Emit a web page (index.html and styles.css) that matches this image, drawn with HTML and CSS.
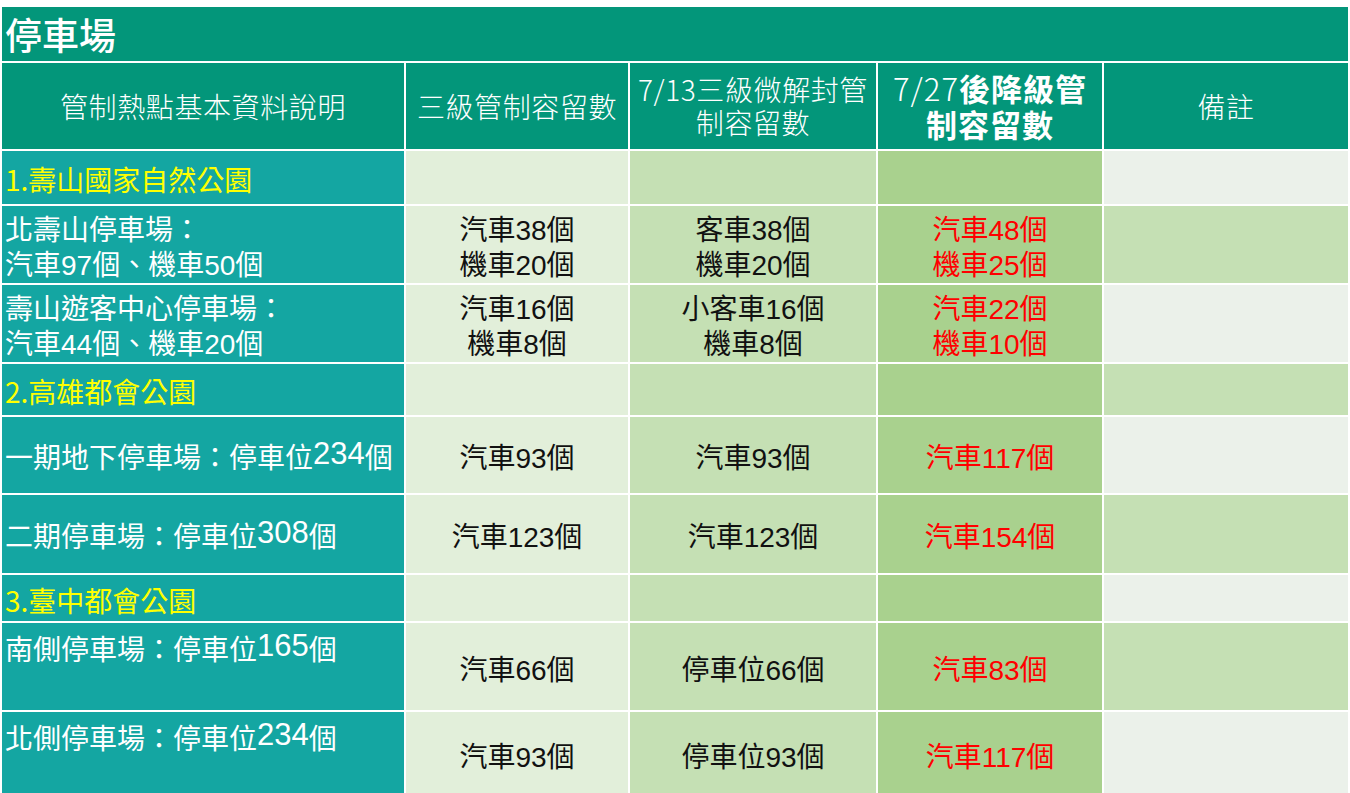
FILE: index.html
```html
<!DOCTYPE html>
<html lang="zh-Hant">
<head>
<meta charset="utf-8">
<title>停車場</title>
<link rel="stylesheet" href="styles.css">
</head>
<body>
<div class="sheet">
  <div class="title">停車場</div>

  <div class="cell head">管制熱點基本資料說明</div>
  <div class="cell head">三級管制容留數</div>
  <div class="cell head">7/13三級微解封管<br>制容留數</div>
  <div class="cell head strong"><span><span class="thin">7/27</span>後降級管<br>制容留數</span></div>
  <div class="cell head">備註</div>

  <div class="cell name section">1.壽山國家自然公園</div>
  <div class="cell c2"></div>
  <div class="cell c3"></div>
  <div class="cell c4"></div>
  <div class="cell c5a"></div>

  <div class="cell name">北壽山停車場：<br>汽車97個、機車50個</div>
  <div class="cell c2">汽車38個<br>機車20個</div>
  <div class="cell c3">客車38個<br>機車20個</div>
  <div class="cell c4">汽車48個<br>機車25個</div>
  <div class="cell c5b"></div>

  <div class="cell name">壽山遊客中心停車場：<br>汽車44個、機車20個</div>
  <div class="cell c2">汽車16個<br>機車8個</div>
  <div class="cell c3">小客車16個<br>機車8個</div>
  <div class="cell c4">汽車22個<br>機車10個</div>
  <div class="cell c5a"></div>

  <div class="cell name section">2.高雄都會公園</div>
  <div class="cell c2"></div>
  <div class="cell c3"></div>
  <div class="cell c4"></div>
  <div class="cell c5b"></div>

  <div class="cell name">一期地下停車場：停車位<span class="num">234</span>個</div>
  <div class="cell c2">汽車93個</div>
  <div class="cell c3">汽車93個</div>
  <div class="cell c4">汽車117個</div>
  <div class="cell c5a"></div>

  <div class="cell name">二期停車場：停車位<span class="num">308</span>個</div>
  <div class="cell c2">汽車123個</div>
  <div class="cell c3">汽車123個</div>
  <div class="cell c4">汽車154個</div>
  <div class="cell c5b"></div>

  <div class="cell name section">3.臺中都會公園</div>
  <div class="cell c2"></div>
  <div class="cell c3"></div>
  <div class="cell c4"></div>
  <div class="cell c5a"></div>

  <div class="cell name top">南側停車場：停車位<span class="num">165</span>個</div>
  <div class="cell c2">汽車66個</div>
  <div class="cell c3">停車位66個</div>
  <div class="cell c4">汽車83個</div>
  <div class="cell c5b"></div>

  <div class="cell name top">北側停車場：停車位<span class="num">234</span>個</div>
  <div class="cell c2">汽車93個</div>
  <div class="cell c3">停車位93個</div>
  <div class="cell c4">汽車117個</div>
  <div class="cell c5a"></div>
</div>
</body>
</html>
```

FILE: styles.css
```css
html, body {
  margin: 0;
  padding: 0;
  background: #ffffff;
}

body {
  font-family: "Liberation Sans", "Noto Sans CJK TC", sans-serif;
  overflow: hidden;
}

.sheet {
  display: grid;
  grid-template-columns: 402px 222px 246px 224px 244px;
  grid-template-rows: 54px 86px 53px 77px 77px 51px 76px 78px 46px 87px 83px;
  gap: 2px;
  margin: 7px 0 0 2px;
  width: max-content;
  background: #ffffff;
}

.title {
  grid-column: 1 / -1;
  background: #03967a;
  color: #ffffff;
  font-family: "Noto Sans CJK TC", sans-serif;
  font-size: 37px;
  font-weight: 500;
  line-height: 54px;
  padding-left: 3px;
}

.cell {
  display: flex;
  align-items: center;
  justify-content: center;
  text-align: center;
  font-size: 28px;
  line-height: 35px;
  color: #111111;
  padding-top: 7px;
  box-sizing: border-box;
}

.head {
  background: #03967a;
  color: #ffffff;
  font-family: "Noto Sans CJK TC", sans-serif;
  font-weight: 300;
  letter-spacing: 0.6px;
  line-height: 33px;
  padding-top: 0;
}

.head.strong {
  font-weight: 700;
  font-size: 31px;
  letter-spacing: 1px;
  line-height: 36px;
}

.head .thin {
  font-weight: 300;
}

.name {
  background: #14a6a2;
  color: #ffffff;
  justify-content: flex-start;
  text-align: left;
  padding-left: 3px;
}

.name.top {
  align-items: flex-start;
  padding-top: 10px;
}

.name.section {
  color: #ffff00;
  font-family: "Noto Sans CJK TC", sans-serif;
  padding-top: 4px;
}

.num {
  font-size: 31px;
  position: relative;
  top: -5px;
}

.c2 { background: #e2efda; }
.c3 { background: #c5e0b4; }
.c4 { background: #a9d18e; color: #ff0000; }
.c5a { background: #ebf1ea; }
.c5b { background: #c5e0b4; }
```
